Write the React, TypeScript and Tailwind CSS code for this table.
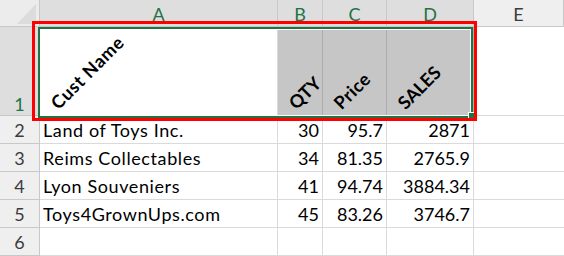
import React from 'react';

const rows = [
  { n: '2', name: 'Land of Toys Inc.', qty: '30', price: '95.7', sales: '2871' },
  { n: '3', name: 'Reims Collectables', qty: '34', price: '81.35', sales: '2765.9' },
  { n: '4', name: 'Lyon Souveniers', qty: '41', price: '94.74', sales: '3884.34' },
  { n: '5', name: 'Toys4GrownUps.com', qty: '45', price: '83.26', sales: '3746.7' },
  { n: '6', name: '', qty: '', price: '', sales: '' },
];

const colHead = 'flex items-center justify-center border-r border-b border-[#c8c8c8] pt-[1px]';
const rowHead = 'flex items-end justify-center border-r border-b border-[#c8c8c8] bg-[#efefef] text-[#3c3c3c] pb-[4px]';
const cell = 'flex items-end border-r border-b border-[#dadada] pb-[4px] whitespace-nowrap overflow-hidden';
const tilted = 'ml-[20px] mb-[3px] origin-bottom-left -rotate-45 font-bold leading-none whitespace-nowrap text-black';

const App: React.FC = () => {
  return (
    <div className="relative w-[564px] h-[256px] overflow-hidden bg-white text-[18px] leading-none text-black font-['Lato','Liberation_Sans',sans-serif]">
      <div className="grid grid-cols-[40px_238px_45px_64px_87px_1fr] grid-rows-[27px_89px_28px_28px_28px_28px_28px]">
        {/* column headers */}
        <div className="flex items-end justify-end border-r border-b border-[#c8c8c8] bg-[#ececec] pr-[3px] pb-[2px]">
          <svg width="19" height="20" viewBox="0 0 19 20">
            <polygon points="0,20 19,20 19,0" fill="#dcdcdc" />
          </svg>
        </div>
        <div className={`${colHead} bg-[#dedede] text-[#217346]`}>A</div>
        <div className={`${colHead} bg-[#dedede] text-[#217346]`}>B</div>
        <div className={`${colHead} bg-[#dedede] text-[#217346]`}>C</div>
        <div className={`${colHead} bg-[#dedede] text-[#217346]`}>D</div>
        <div className={`${colHead} bg-[#efefef] text-[#3c3c3c]`}>E</div>

        {/* row 1: rotated headings */}
        <div className="flex items-end justify-center border-r border-b border-[#c8c8c8] bg-[#dedede] text-[#217346] pb-[2px]">1</div>
        <div className="flex items-end border-r border-b border-[#dadada] bg-white">
          <span className={`${tilted} tracking-[0.7px]`}>Cust Name</span>
        </div>
        <div className="flex items-end border-r border-b border-[#acacac] bg-[#c6c6c6]">
          <span className={tilted}>QTY</span>
        </div>
        <div className="flex items-end border-r border-b border-[#acacac] bg-[#c6c6c6]">
          <span className={`${tilted} tracking-[0.5px]`}>Price</span>
        </div>
        <div className="flex items-end border-r border-b border-[#acacac] bg-[#c6c6c6]">
          <span className={tilted}>SALES</span>
        </div>
        <div className="border-b border-[#dadada]" />

        {rows.map((r) => (
          <React.Fragment key={r.n}>
            <div className={rowHead}>{r.n}</div>
            <div className={`${cell} pl-[3px] tracking-[0.6px]`}>{r.name}</div>
            <div className={`${cell} justify-end pr-[3px]`}>{r.qty}</div>
            <div className={`${cell} justify-end pr-[3px]`}>{r.price}</div>
            <div className={`${cell} justify-end pr-[3px]`}>{r.sales}</div>
            <div className="border-b border-[#dadada]" />
          </React.Fragment>
        ))}
      </div>

      {/* selection A1:D1 */}
      <div className="absolute left-[38px] top-[27px] w-[435px] h-[91px] border-2 border-[#217346] shadow-[inset_0_0_0_1px_white]" />
      <div className="absolute left-[468px] top-[112px] w-[7px] h-[7px] bg-[#217346] border border-white" />

      {/* red highlight box */}
      <div className="absolute left-[32px] top-[21px] w-[445px] h-[100px] border-[3px] border-[#ff0000]" />
    </div>
  );
};

export default App;
